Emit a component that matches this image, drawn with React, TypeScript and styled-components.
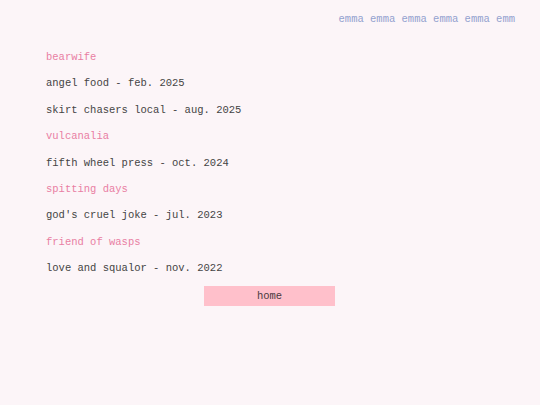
import React from "react";
import styled, { createGlobalStyle } from "styled-components";

const GlobalStyle = createGlobalStyle`
    html, body {
        margin: 0;
        padding: 0;
        background-color: #fcf5f8;
    }
    body {
        font-family: "Liberation Mono", "Courier New", monospace;
        font-size: 10.5px;
    }
`

const Page = styled.div`
    display: flex;
    flex-direction: column;
    width: 540px;
    min-height: 405px;
    box-sizing: border-box;
    padding: 12px 0 0 0;
`

const Ticker = styled.div`
    align-self: flex-end;
    margin-right: 25px;
    white-space: pre;
    color: #93a1cf;
    line-height: 14px;
`

const List = styled.div`
    display: flex;
    flex-direction: column;
    padding: 24px 0 0 46px;
`

const Row = styled.div<{ $heading?: boolean }>`
    height: 26.4px;
    line-height: 14px;
    color: ${(p) => (p.$heading ? "#e97ea3" : "#444444")};
    white-space: pre;
`

const HomeButton = styled.a`
    display: flex;
    align-items: center;
    justify-content: center;
    align-self: center;
    width: 131px;
    height: 20px;
    margin-top: -2px;
    margin-left: -1px;
    background-color: #ffc0cb;
    color: #4a3a40;
    text-decoration: none;
`

const entries = [
    { text: "bearwife", heading: true },
    { text: "angel food - feb. 2025" },
    { text: "skirt chasers local - aug. 2025" },
    { text: "vulcanalia", heading: true },
    { text: "fifth wheel press - oct. 2024" },
    { text: "spitting days", heading: true },
    { text: "god's cruel joke - jul. 2023" },
    { text: "friend of wasps", heading: true },
    { text: "love and squalor - nov. 2022" },
];

const App = () => {
    return (
        <>
            <GlobalStyle />
            <Page>
                <Ticker>emma emma emma emma emma emm</Ticker>
                <List>
                    {entries.map((e) => (
                        <Row key={e.text} $heading={e.heading}>
                            {e.text}
                        </Row>
                    ))}
                </List>
                <HomeButton href="#">home</HomeButton>
            </Page>
        </>
    );
};

export default App;
